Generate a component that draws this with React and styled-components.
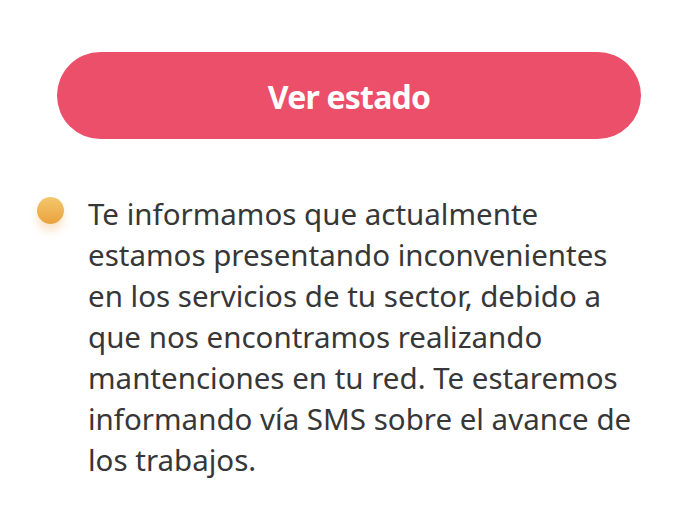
import React from 'react';
import styled, { createGlobalStyle } from 'styled-components';

const GlobalStyle = createGlobalStyle`
  body {
    margin: 0;
    background: #ffffff;
    font-family: "Noto Sans", "Open Sans", sans-serif;
  }
`;

const lines = [
  'Te informamos que actualmente',
  'estamos presentando inconvenientes',
  'en los servicios de tu sector, debido a',
  'que nos encontramos realizando',
  'mantenciones en tu red. Te estaremos',
  'informando vía SMS sobre el avance de',
  'los trabajos.',
];

function App() {
  return (
    <>
      <GlobalStyle />
      <Page>
        <StatusButton type="button">Ver estado</StatusButton>
        <Notice>
          <Dot />
          <Message>
            {lines.map((line) => (
              <Line key={line}>{line}</Line>
            ))}
          </Message>
        </Notice>
      </Page>
    </>
  );
}

export default App;

const Page = styled.div`
  width: 700px;
  height: 514px;
  box-sizing: border-box;
  padding: 52px 59px 0 57px;
  display: flex;
  flex-direction: column;
  overflow: hidden;
`;

const StatusButton = styled.button`
  height: 87px;
  width: 100%;
  border: none;
  border-radius: 44px;
  background: #ec4f69;
  color: #ffffff;
  font-family: "Noto Sans", sans-serif;
  font-weight: 700;
  font-size: 32px;
  letter-spacing: -0.8px;
  padding: 2px 0 0;
  cursor: pointer;
`;

const Notice = styled.div`
  display: flex;
  align-items: flex-start;
  gap: 24px;
  margin-top: 54px;
  margin-left: -20px;
`;

const Dot = styled.span`
  flex: none;
  width: 27px;
  height: 27px;
  margin-top: 4px;
  border-radius: 50%;
  background: linear-gradient(180deg, #f3c76c 0%, #eaa23f 100%);
  box-shadow: 0 7px 9px rgba(236, 160, 60, 0.28);
`;

const Message = styled.p`
  margin: 0;
  font-size: 29.5px;
  line-height: 41px;
  color: #373737;
`;

const Line = styled.span`
  display: block;
  white-space: nowrap;
`;
